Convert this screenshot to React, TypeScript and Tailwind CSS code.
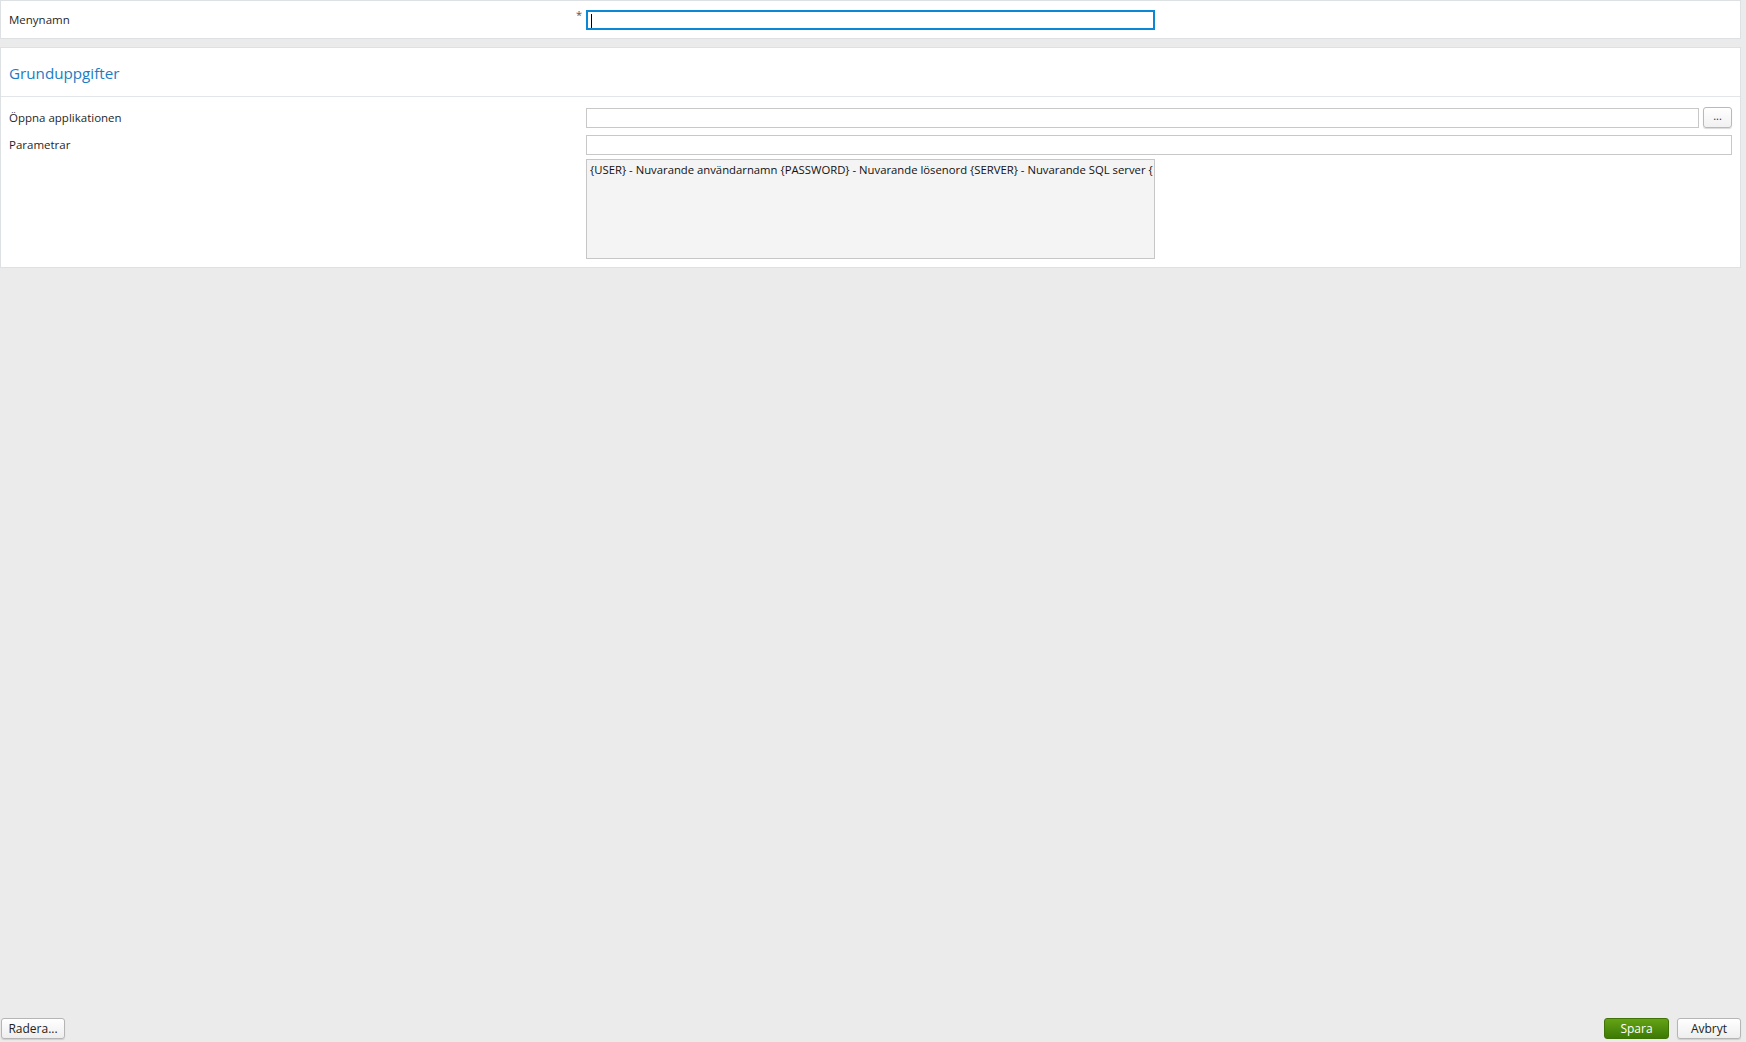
import React from 'react';

const Label = ({ children }: { children: React.ReactNode }) => (
    <div className="w-[577px] shrink-0 text-[11.5px] text-[#1f1f1f]">{children}</div>
);

export default function App() {
    return (
        <div className="flex h-screen flex-col bg-[#ebebeb] font-['Open_Sans',sans-serif] text-[11.5px] text-[#1f1f1f]">
            <div className="flex-1">
                {/* menynamn */}
                <div className="mr-[5px] flex h-[39px] items-center border border-[#dde1e4] bg-white pl-2">
                    <div className="w-[567px] shrink-0">Menynamn</div>
                    <div className="relative w-[10px] shrink-0 self-stretch">
                        <span className="absolute top-[6px] left-[0px] text-[11px] text-[#555]">*</span>
                    </div>
                    <div className="relative h-[20px] w-[569px] border-2 border-[#0a88d6] bg-white">
                        <span className="absolute top-[2px] left-[3px] h-[14px] w-px bg-black" />
                    </div>
                </div>

                {/* grunduppgifter */}
                <div className="mt-2 mr-[5px] border border-[#dde1e4] bg-white">
                    <div className="flex h-[49px] items-center border-b border-[#e3e6e8] pt-[3px] pl-2">
                        <h2 className="text-[15.2px] text-[#1b7dc3]">Grunduppgifter</h2>
                    </div>
                    <div className="flex flex-col pt-[10px] pr-2 pb-2 pl-2">
                        <div className="flex items-center">
                            <Label>Öppna applikationen</Label>
                            <div className="h-[20px] flex-1 border border-[#c8c8c8] bg-white" />
                            <button className="ml-[4px] flex h-[21px] w-[29px] items-center justify-center rounded-[3px] border border-[#b9b9b9] bg-gradient-to-b from-white to-[#f1f1f1] pb-[2px] text-[11px] text-[#333] shadow-[0_1px_1px_rgba(0,0,0,0.15)]">
                                ...
                            </button>
                        </div>
                        <div className="mt-[7px] flex items-center">
                            <Label>Parametrar</Label>
                            <div className="h-[20px] flex-1 border border-[#c8c8c8] bg-white" />
                        </div>
                        <div className="mt-[4px] flex">
                            <div className="w-[577px] shrink-0" />
                            <div className="h-[100px] w-[569px] overflow-hidden whitespace-nowrap border border-[#c6c6c6] bg-[#f4f4f4] px-[3px] pt-[2px] text-[11.3px] text-[#111]">
                                {'{USER} - Nuvarande användarnamn {PASSWORD} - Nuvarande lösenord {SERVER} - Nuvarande SQL server {'}
                            </div>
                        </div>
                    </div>
                </div>
            </div>

            {/* knappar */}
            <div className="flex items-center justify-between pr-[5px] pb-[3px] pl-px">
                <button className="h-[21px] w-[64px] rounded-[3px] border border-[#b5b5b5] bg-gradient-to-b from-white to-[#eeeeee] text-[12px] text-[#222] shadow-[0_1px_1px_rgba(0,0,0,0.12)]">
                    Radera...
                </button>
                <div className="flex gap-2">
                    <button className="h-[21px] w-[65px] rounded-[3px] border border-[#3f7308] bg-gradient-to-b from-[#64a315] to-[#3c7a05] text-[12px] text-white">
                        Spara
                    </button>
                    <button className="h-[21px] w-[64px] rounded-[3px] border border-[#b5b5b5] bg-gradient-to-b from-white to-[#eeeeee] text-[12px] text-[#222] shadow-[0_1px_1px_rgba(0,0,0,0.12)]">
                        Avbryt
                    </button>
                </div>
            </div>
        </div>
    );
}
